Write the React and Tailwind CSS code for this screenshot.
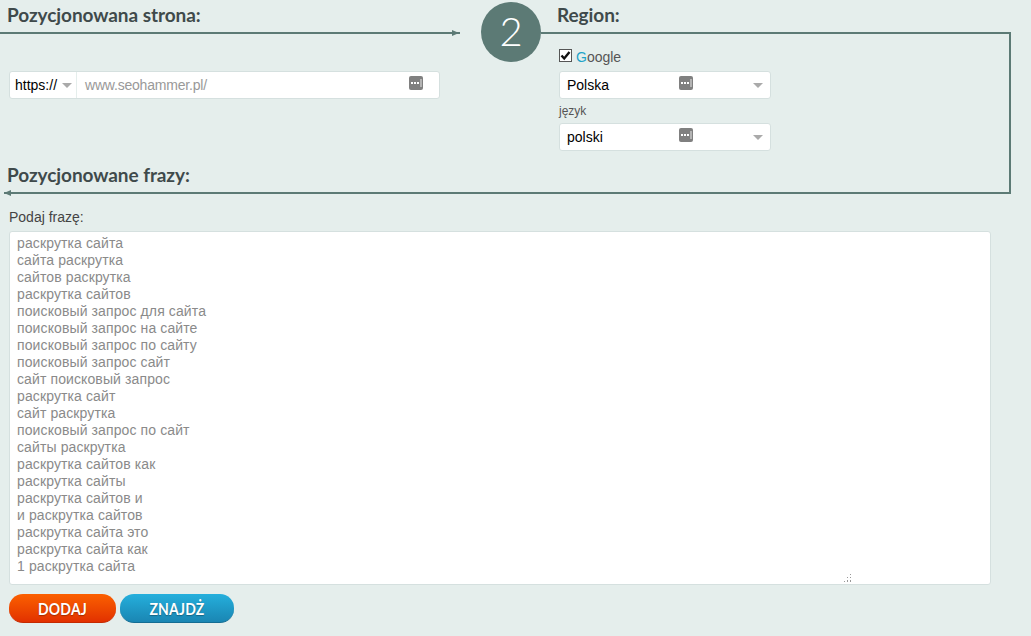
const PHRASES = [
  "раскрутка сайта","сайта раскрутка","сайтов раскрутка","раскрутка сайтов","поисковый запрос для сайта","поисковый запрос на сайте","поисковый запрос по сайту","поисковый запрос сайт","сайт поисковый запрос","раскрутка сайт","сайт раскрутка","поисковый запрос по сайт","сайты раскрутка","раскрутка сайтов как","раскрутка сайты","раскрутка сайтов и","и раскрутка сайтов","раскрутка сайта это","раскрутка сайта как","1 раскрутка сайта",
].join("\n");

function PassIcon({ className = "" }) {
  return (
    <svg width="14" height="14" viewBox="0 0 14 14" className={className}>
      <rect width="14" height="14" rx="2" fill="#808080" />
      <rect x="2" y="6" width="2" height="2" fill="#fff" />
      <rect x="5" y="6" width="2" height="2" fill="#fff" />
      <rect x="8" y="6" width="2" height="2" fill="#fff" />
      <rect x="11.5" y="3" width="1" height="8" fill="#e8e8e8" />
    </svg>
  );
}

function Caret({ className = "" }) {
  return <span className={`block w-0 h-0 border-x-[5px] border-x-transparent border-t-[5px] border-t-[#aaaaaa] ${className}`} />;
}

function Heading({ children }) {
  return <h2 className="font-['Lato','Open_Sans',sans-serif] font-bold text-[19px] leading-[30px] tracking-[-0.07px] text-[#3f4a4b]">{children}</h2>;
}

function SelectBox({ label }) {
  return (
    <div className="relative w-[212px] h-[28px] bg-white border border-[#d5e0df] rounded-[3px] flex items-center pl-[7px] text-[14px] text-black">
      <span>{label}</span>
      <PassIcon className="absolute left-[119px] top-[4px]" />
      <Caret className="absolute right-[7px] top-[11px]" />
    </div>
  );
}

export default function App() {
  return (
    <div className="w-full h-[636px] overflow-hidden bg-[#e5eeec] font-['Liberation_Sans',Arial,sans-serif]">
      <div className="w-[1011px] h-[194px] flex flex-col">
        <div className="h-[162px] flex">
          <div className="w-[460px] shrink-0">
            <div className="relative h-[34px] border-b-2 border-[#5c7a75] pl-[7px]">
              <Heading>Pozycjonowana strona:</Heading>
              <span className="absolute right-[1px] top-[30px] w-0 h-0 border-y-[3px] border-y-transparent border-l-[7px] border-l-[#5c7a75]" />
            </div>
            <div className="ml-[9px] mt-[37px] w-[431px] h-[28px] bg-white border border-[#d5e0df] rounded-[3px] flex items-center text-[14px]">
              <div className="w-[67px] h-full border-r border-[#e5eeec] flex items-center pl-[5px] text-black shrink-0">
                <span>https://</span>
                <Caret className="ml-[5px]" />
              </div>
              <span className="ml-[8px] text-[#999999] tracking-[-0.2px]">www.seohammer.pl/</span>
              <PassIcon className="ml-auto mr-[16px] -mt-[4px]" />
            </div>
          </div>
          <div className="ml-[21px] mt-[2px] w-[60px] h-[60px] rounded-full bg-[#5c7a75] shrink-0 flex items-center justify-center text-white text-[40px] leading-[58px] pb-[2px] font-light font-['Lato',sans-serif] relative z-10">2</div>
          <div className="flex-1 flex flex-col">
            <div className="h-[34px] border-b-2 border-[#5c7a75] pl-[16px]">
              <Heading>Region:</Heading>
            </div>
            <div className="flex-1 border-r-2 border-[#5c7a75] pl-[18px] pt-[15px]">
              <div className="flex items-center h-[13px]">
                <span className="w-[13px] h-[13px] border border-[#555555] bg-white flex items-center justify-center shrink-0">
                  <svg width="11" height="11" viewBox="0 0 11 11"><path d="M1.5 5.5 L4.2 8.5 L9.5 2" fill="none" stroke="#111" strokeWidth="2.4" /></svg>
                </span>
                <span className="ml-[4px] text-[14px] text-[#555555] mt-[3px]"><span className="text-[#1fa3c8]">G</span>oogle</span>
              </div>
              <div className="mt-[9px]"><SelectBox label="Polska" /></div>
              <div className="text-[12px] leading-[14px] text-[#555555] mt-[5px] mb-[5px]">język</div>
              <SelectBox label="polski" />
            </div>
          </div>
        </div>
        <div className="relative ml-[4px] h-[32px] border-b-2 border-r-2 border-[#5c7a75] pl-[3px]">
          <div className="-mt-[2px]"><Heading>Pozycjonowane frazy:</Heading></div>
          <span className="absolute left-0 top-[28px] w-0 h-0 border-y-[3px] border-y-transparent border-r-[7px] border-r-[#5c7a75]" />
        </div>
      </div>
      <div className="pl-[9px]">
        <div className="mt-[13px] text-[14px] leading-[20px] text-[#444444]">Podaj frazę:</div>
        <div className="relative mt-[4px] w-[982px] h-[354px]">
          <textarea
            readOnly
            defaultValue={PHRASES}
            className="block w-full h-full resize-none overflow-hidden bg-white border border-[#d5e0df] rounded-[3px] pl-[7px] pt-[3px] text-[14px] leading-[17px] tracking-[0.11px] text-[#8a8a8a] outline-none font-['Liberation_Sans',Arial,sans-serif]"
          />
          <svg width="9" height="9" viewBox="0 0 9 9" className="absolute left-[834px] top-[343px]">
            <g fill="#999999">
              <rect x="7" y="0" width="1" height="1" /><rect x="7" y="3" width="1" height="1" /><rect x="4" y="3" width="1" height="1" />
              <rect x="7" y="6" width="1" height="2" /><rect x="4" y="6" width="1" height="2" /><rect x="1" y="7" width="1" height="1" />
            </g>
          </svg>
        </div>
        <div className="mt-[9px] flex gap-[4px]">
          <button className="w-[107px] h-[29px] rounded-[14px] bg-gradient-to-b from-[#fb5f00] to-[#e23000] border-b border-[#c42a00] text-white font-bold text-[14px] font-['Lato',sans-serif] tracking-[0.2px] [text-shadow:0_1px_1px_rgba(0,0,0,0.3)]">
            <span className="inline-block scale-y-[1.15]">DODAJ</span>
          </button>
          <button className="w-[114px] h-[29px] rounded-[14px] bg-gradient-to-b from-[#25afdc] to-[#1a86b3] border-b border-[#146d93] text-white font-bold text-[14px] font-['Lato',sans-serif] tracking-[0.2px] [text-shadow:0_1px_1px_rgba(0,0,0,0.3)]">
            <span className="inline-block scale-y-[1.15]">ZNAJDŻ</span>
          </button>
        </div>
      </div>
    </div>
  );
}
